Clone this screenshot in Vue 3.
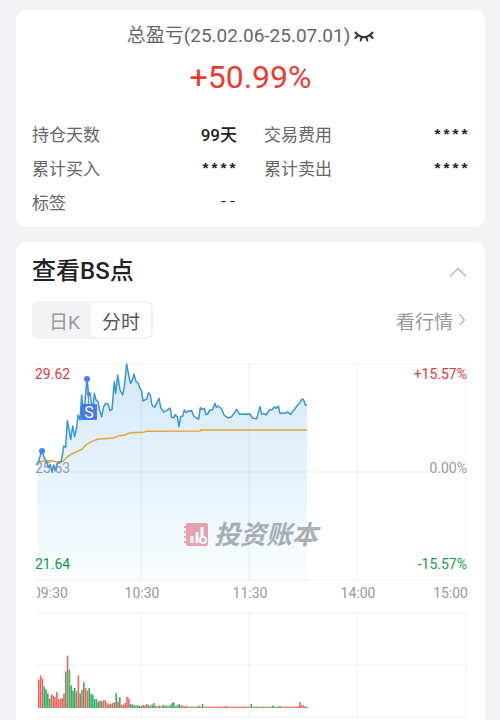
<template>
  <main class="page">
    <section class="card summary">
      <div class="period">
        <span>总盈亏(25.02.06-25.07.01)</span>
        <button class="icon-button" type="button" aria-label="显示金额" @click="hidden = !hidden">
          <svg width="20" height="12" viewBox="0 0 20 12">
            <path d="M1.5 2.5C4 5.6 6.8 7.200 10 7.200s6-1.600 8.500-4.700M4 5.200L1.500 8M7.700 7L6.700 10.500M12.300 7L13.300 10.500M16 5.200L18.500 8" />
          </svg>
        </button>
      </div>
      <div class="total">+50.99%</div>
      <dl class="stats">
        <div v-for="item in stats" :key="item.label" class="stat">
          <dt>{{ item.label }}</dt>
          <dd :class="item.kind">{{ item.value }}</dd>
        </div>
      </dl>
    </section>

    <section class="card chart-card">
      <header class="card-header">
        <h2>查看BS点</h2>
        <button class="icon-button" type="button" aria-label="收起">
          <svg class="arrow" width="18" height="10" viewBox="0 0 18 10"><path d="M1.5 9L9 1.5L16.5 9" /></svg>
        </button>
      </header>

      <div class="toolbar">
        <div class="tabs">
          <button
            v-for="tab in tabs"
            :key="tab"
            type="button"
            :class="{ active: tab === activeTab }"
            @click="activeTab = tab"
          >{{ tab }}</button>
        </div>
        <a class="quote-link" href="#quote">
          看行情
          <svg class="arrow" width="8" height="14" viewBox="0 0 8 14"><path d="M1.5 1.5L6.5 7L1.5 12.5" /></svg>
        </a>
      </div>

      <svg class="chart" viewBox="0 0 437 364">
        <defs>
          <linearGradient id="fill" x1="0" y1="0" x2="0" y2="1">
            <stop offset="0" stop-color="#d5e9f8" />
            <stop offset="0.5" stop-color="#e5f2fc" />
            <stop offset="1" stop-color="#fafdff" />
          </linearGradient>
          <clipPath id="axis"><rect x="5" y="225" width="432" height="25" /></clipPath>
        </defs>

        <!-- price -->
        <path class="area" :d="areaPath" />
        <path class="grid" d="M5 8H434M5 116H434M5 224H434M109 8V224M217 8V224M325 8V224M434 24V208" />

        <g class="watermark">
          <rect x="154" y="167" width="22" height="23" rx="2" />
          <path class="rings" d="M152 171h4M152 176h4M152 181h4M152 186h4" />
          <path class="columns" d="M160 187v-7M165 187v-11M170 181v-10" />
          <circle cx="171" cy="184" r="3" />
          <text x="182" y="188">投资账本</text>
        </g>

        <text class="label muted" x="3" y="117">25.63</text>
        <polyline class="average" :points="toPoints(average)" />
        <polyline class="price" :points="toPoints(price)" />
        <circle class="dot" cx="10" cy="95" r="3" />
        <circle class="dot" cx="55" cy="23" r="3" />
        <path class="stem" d="M55 23L57 50" />
        <circle class="dot" cx="57" cy="38" r="2" />
        <rect class="badge" x="49" y="48" width="16" height="16" rx="1" />
        <text class="badge-text" x="57" y="62">S</text>

        <text class="label up" x="3" y="23">29.62</text>
        <text class="label down" x="3" y="213">21.64</text>
        <text class="label up end" x="435" y="23">+15.57%</text>
        <text class="label muted end" x="435" y="117">0.00%</text>
        <text class="label down end" x="435" y="213">-15.57%</text>

        <g clip-path="url(#axis)">
          <text
            v-for="tick in ticks"
            :key="tick.text"
            class="label muted"
            :class="tick.anchor"
            :x="tick.x"
            y="242"
          >{{ tick.text }}</text>
        </g>

        <!-- volume -->
        <path class="grid" d="M5 257H434M5 309H434M5 361H434M109 257V361M217 257V361M325 257V361M434 257V361" />
        <rect
          v-for="(bar, i) in volume"
          :key="i"
          :x="bar.x"
          :y="352 - bar.height"
          width="1.6"
          :height="bar.height"
          :fill="bar.up ? '#ed6560' : '#31b365'"
        />
      </svg>
    </section>
  </main>
</template>

<script setup>
import { ref } from 'vue'

const hidden = ref(true)
const tabs = ['日K', '分时']
const activeTab = ref('分时')

const stats = [
  { label: '持仓天数', value: '99天' },
  { label: '交易费用', value: '****', kind: 'masked' },
  { label: '累计买入', value: '****', kind: 'masked' },
  { label: '累计卖出', value: '****', kind: 'masked' },
  { label: '标签', value: '--', kind: 'empty' }
]

const ticks = [
  { text: '09:30', x: 1, anchor: '' },
  { text: '10:30', x: 110, anchor: 'middle' },
  { text: '11:30', x: 218, anchor: 'middle' },
  { text: '14:00', x: 326, anchor: 'middle' },
  { text: '15:00', x: 436, anchor: 'end' }
]

// samples are stored as integers, three units per chart unit
const price = [
  [52, 345], [60, 320], [66, 300], [72, 322], [80, 335], [85, 352], [91, 343], [96, 365], [101, 345],
  [106, 362], [112, 340], [119, 338], [124, 332], [128, 310], [131, 288], [137, 292], [142, 212],
  [147, 238], [152, 268], [158, 228], [164, 260], [170, 232], [174, 195], [180, 210], [185, 135],
  [190, 190], [194, 165], [201, 85], [206, 135], [210, 130], [215, 160], [219, 175], [223, 130],
  [228, 150], [234, 155], [238, 178], [245, 200], [251, 170], [257, 160], [264, 162], [270, 182],
  [276, 178], [283, 95], [287, 130], [293, 75], [300, 120], [308, 135], [313, 110], [320, 42],
  [327, 80], [332, 100], [337, 90], [342, 72], [348, 95], [354, 98], [360, 115], [365, 123],
  [369, 153], [374, 150], [380, 148], [385, 128], [391, 135], [396, 165], [404, 172], [411, 158],
  [417, 145], [422, 172], [430, 186], [440, 182], [450, 174], [455, 202], [462, 203], [466, 194],
  [472, 200], [477, 230], [482, 200], [488, 198], [493, 180], [498, 188], [504, 183], [515, 182],
  [521, 197], [528, 204], [536, 207], [541, 173], [547, 178], [553, 175], [558, 194], [563, 192],
  [570, 180], [577, 180], [585, 160], [589, 172], [594, 168], [605, 176], [612, 195], [623, 203],
  [634, 201], [642, 190], [650, 178], [658, 193], [690, 192], [698, 205], [710, 206], [720, 170],
  [725, 193], [732, 190], [738, 195], [748, 180], [755, 180], [763, 171], [769, 175], [775, 168],
  [780, 190], [795, 190], [803, 186], [812, 193], [820, 182], [825, 176], [833, 165], [840, 158],
  [846, 147], [851, 150], [856, 165], [861, 165]
]

const average = [
  [52, 335], [90, 332], [110, 335], [128, 335], [140, 322], [155, 312], [170, 305], [185, 298],
  [200, 283], [215, 275], [232, 268], [250, 266], [280, 264], [295, 258], [315, 255], [330, 248],
  [370, 247], [380, 244], [540, 243], [542, 240], [861, 240]
]

const toPoints = list => list.map(([x, y]) => `${(x - 36) / 3},${(y - 18) / 3}`).join(' ')

const areaPath = `M5,224 L${toPoints(price)} L275,224 Z`

// r = up, g = down, followed by the bar height
const volumeData = `r86 r98 r89 g65 g56 g44 g28 r40 r38 r33 r48 r27 r27 r30 r44 g110 r157 g115 g68 g52 g60
  r50 r98 g44 r54 g77 r60 r52 g60 g43 g40 g27 g27 g19 r23 g20 r23 r23 r15 g11 r13 r15 r17 g45 r20 g33
  r10 r10 r15 r33 r29 g12 g11 g8 r7 g8 g6 g6 r9 g7 r12 g8 r7 g10 g15 r6 r5 g7 r5 g9 r7 g8 r5 g9 g15 g17
  r6 g8 g12 r8 r7 r5 g7 r4 r4 g4 r4 r4 r4 g7 r4 g12 r4 r4 r4 r4 r4 r4 r4 r4 r4 r4 r4 r4 g6 r4 r4 r4 r4
  r4 r4 r4 r4 r4 r4 r4 r4 r4 g12 r4 g4 r4 r4 r4 g4 g4 r4 r4 g4 r4 g7 r4 g4 r4 g6 r4 r4 g4 r4 r4 r4 r4
  r4 r4 r5 r18 r9 r8 g5 g3`

const volume = volumeData.split(/\s+/).map((item, i) => ({
  x: 6 + i * 1.8,
  up: item[0] === 'r',
  height: Number(item.slice(1)) / 3
}))
</script>

<style>
body {
  margin: 0;
  background: #f3f3f6;
}
</style>

<style scoped>
.page {
  display: flex;
  flex-direction: column;
  gap: 15px;
  padding: 10px 15px 0 16px;
  font-family: Roboto, "Noto Sans CJK SC", sans-serif;
  color: #666;
}

.card {
  background: #fff;
  border-radius: 10px;
  padding: 0 16px;
}

.summary {
  padding-top: 12px;
  padding-bottom: 7px;
}

.period {
  display: flex;
  justify-content: center;
  align-items: center;
  gap: 4px;
  font-size: 19px;
  line-height: 28px;
}

button {
  font: inherit;
  color: inherit;
  background: none;
  border: none;
  padding: 0;
  cursor: pointer;
}

.icon-button {
  display: flex;
}

.icon-button svg {
  fill: none;
  stroke: #333;
  stroke-width: 2;
  stroke-linecap: round;
}

.total {
  margin: 6px 0 20px;
  text-align: center;
  font-size: 32px;
  line-height: 42px;
  color: #ee3b32;
}

.stats {
  display: grid;
  grid-template-columns: 1fr 1fr;
  column-gap: 27px;
  margin: 0;
}

.stat {
  display: flex;
  justify-content: space-between;
  font-size: 17px;
  line-height: 34px;
}

.stat dd {
  margin: 0;
  color: #222;
  font-weight: 500;
}

.stat .masked,
.stat .empty {
  font-family: "Liberation Mono", monospace;
  font-size: 15px;
}

.stat .masked {
  padding-top: 4px;
  line-height: 30px;
  font-weight: 700;
}

.chart-card {
  border-radius: 10px 10px 0 0;
}

.card-header {
  display: flex;
  justify-content: space-between;
  align-items: center;
  padding-right: 2px;
}

.card-header h2 {
  margin: 0;
  font-size: 24px;
  line-height: 59px;
  font-weight: 500;
  color: #222;
}

.icon-button .arrow,
.arrow {
  fill: none;
  stroke: #bbb;
  stroke-width: 1.5;
}

.toolbar {
  display: flex;
  justify-content: space-between;
  align-items: center;
  font-size: 19px;
}

.tabs {
  display: flex;
  padding: 2px;
  border-radius: 6px;
  background: #f3f3f5;
}

.tabs button {
  height: 34px;
  padding: 0 11px;
  border-radius: 5px;
  color: #999;
}

.tabs button:first-child {
  padding-left: 15px;
}

.tabs button.active {
  background: #fff;
  color: #555;
}

.quote-link {
  display: flex;
  align-items: center;
  gap: 5px;
  padding-right: 3px;
  color: #999;
  text-decoration: none;
}

.chart {
  display: block;
  width: 100%;
  margin-top: 17px;
}

.area {
  fill: url(#fill);
}

.grid {
  fill: none;
  stroke: #000;
  stroke-opacity: 0.06;
}

.price {
  fill: none;
  stroke: #3795d9;
  stroke-width: 1.5;
  stroke-linejoin: round;
}

.average {
  fill: none;
  stroke: #e6a532;
  stroke-width: 1.5;
}

.dot {
  fill: #4a83e6;
}

.stem {
  stroke: #4a83e6;
}

.badge {
  fill: #4779ed;
}

.badge-text {
  fill: #fff;
  font-size: 16px;
  text-anchor: middle;
}

.label {
  font-size: 14px;
}

.up {
  fill: #e0393e;
}

.down {
  fill: #149a4b;
}

.muted {
  fill: #999;
}

.middle {
  text-anchor: middle;
}

.end {
  text-anchor: end;
}

.watermark {
  opacity: 0.5;
}

.watermark rect {
  fill: #e24a62;
}

.watermark text {
  fill: #606470;
  font-size: 26px;
  font-weight: 700;
  font-style: italic;
}

.watermark .rings {
  stroke: #e24a62;
  stroke-width: 2;
}

.watermark .columns {
  stroke: #fff;
  stroke-width: 3;
}

.watermark circle {
  fill: #e24a62;
  stroke: #fff;
  stroke-width: 2;
}
</style>
